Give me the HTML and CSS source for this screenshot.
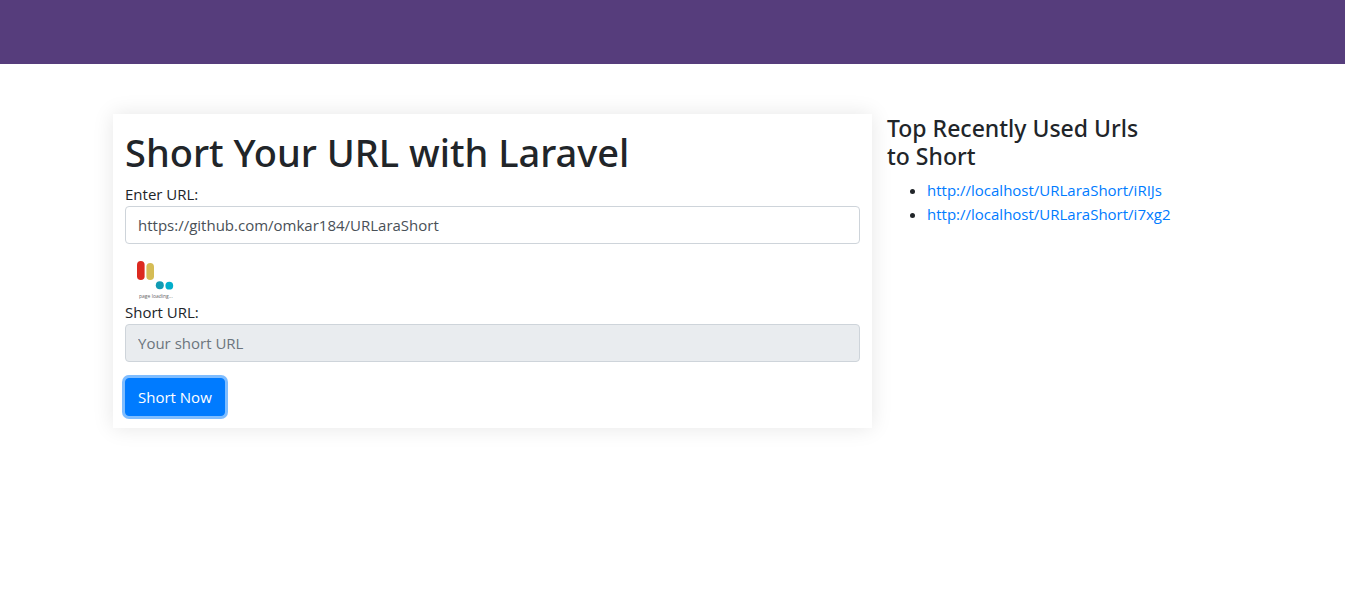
FILE: index.html
```html
<!DOCTYPE html>
<html lang="en">
<head>
<meta charset="utf-8">
<meta name="viewport" content="width=device-width, initial-scale=1">
<title>Short Your URL with Laravel</title>
<link rel="stylesheet" href="styles.css">
</head>
<body>
<header class="navbar"></header>
<main class="container">
  <form class="card">
    <h1 class="title">Short Your URL with Laravel</h1>
    <div class="form-group">
      <label for="url">Enter URL:</label>
      <input class="form-control" id="url" type="text" value="https://github.com/omkar184/URLaraShort">
    </div>
    <svg class="loader" viewBox="0 0 60 40" role="img" aria-label="page loading">
      <rect x="12" y="1" width="7.6" height="19" rx="3.8" fill="#dc2a20"/>
      <rect x="21.4" y="3" width="7.6" height="17" rx="3.8" fill="#d5bc55"/>
      <circle cx="34.8" cy="25.2" r="4" fill="#129bb3"/>
      <circle cx="44.3" cy="25.7" r="3.9" fill="#02aecb"/>
      <text class="loader-text" x="14" y="38">page loading...</text>
    </svg>
    <div class="form-group">
      <label for="short">Short URL:</label>
      <input class="form-control" id="short" type="text" placeholder="Your short URL" readonly>
    </div>
    <button class="btn" type="button">Short Now</button>
  </form>
  <aside class="recent">
    <h2 class="subtitle">Top Recently Used Urls to Short</h2>
    <ul class="links">
      <li><a href="#iRIJs">http://localhost/URLaraShort/iRIJs</a></li>
      <li><a href="#i7xg2">http://localhost/URLaraShort/i7xg2</a></li>
    </ul>
  </aside>
</main>
</body>
</html>
```
FILE: styles.css
```css
*, *::before, *::after { box-sizing: border-box; }
body {
  min-height: 100vh;
  margin: 0;
  background: #fff;
  color: #212529;
  font: 15px/24px "Open Sans", "Noto Sans", sans-serif;
}
.navbar { height: 64px; background: #563d7c; }
.container {
  display: grid;
  grid-template-columns: 11fr 5fr;
  align-items: start;
  max-width: 1119px;
  margin: 50px auto 0;
  column-gap: 15px;
}
.card {
  padding: 12px;
  box-shadow: 0 0 20px rgba(0, 0, 0, 0.1);
}
.title, .subtitle { font-family: "Noto Sans", sans-serif; font-weight: 500; }
.title { margin: 0 0 4px; font-size: 38px; line-height: 52px; }
.form-group { margin-bottom: 16px; }
label { display: block; }
.form-control {
  display: block;
  width: 100%;
  height: 38px;
  padding: 6px 12px;
  border: 1px solid #ced4da;
  border-radius: 4px;
  background: #fff;
  color: #495057;
  font: inherit;
}
.form-control[readonly] { background: #e9ecef; }
.form-control::placeholder { color: #6c757d; opacity: 1; }
.loader { display: block; width: 60px; height: 40px; }
.loader-text { font-size: 5px; fill: #666; }
.btn {
  display: block;
  padding: 6px 12px;
  border: 1px solid #007bff;
  border-radius: 4px;
  background: #007bff;
  box-shadow: 0 0 0 3px rgba(0, 123, 255, 0.5);
  color: #fff;
  font: inherit;
}
.subtitle { margin: 0 0 8px; max-width: 260px; font-size: 23px; line-height: 28px; }
.links { margin: 0; padding-left: 40px; }
.links a { color: #007bff; text-decoration: none; }
```
